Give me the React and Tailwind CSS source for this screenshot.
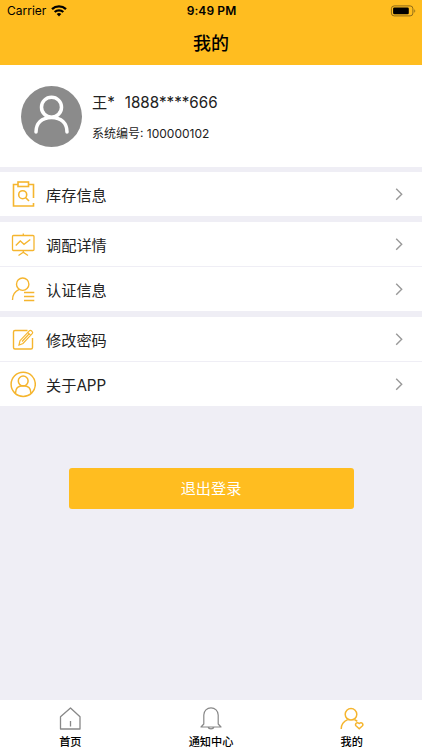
import React from "react";

const line = { fill: "none", stroke: "#f5b52e", strokeWidth: 1.4 };

const ClipboardIcon = () => (
  <svg width="26" height="28" viewBox="0 0 26 28" {...line} strokeWidth="1.6">
    <path d="M8 4.500H3.500V26H23.500V23M18.500 4.500H23.500V18" />
    <rect x="8" y="2" width="10.500" height="4.500" />
    <circle cx="12.700" cy="14.700" r="4" />
    <path d="M15.500 17.500l3.500 3.500" />
  </svg>
);

const BoardIcon = () => (
  <svg width="26" height="28" viewBox="0 0 26 28" {...line} strokeWidth="1.3">
    <rect x="2.500" y="5.500" width="21.500" height="15" rx="1" />
    <path d="M13.300 3.500v2M13.300 20.500v2M8.500 25.500l4.800-3.300 4.700 3.300M5.800 15.500l4.500-4.500 3.700 3.300 6.300-4.800" />
  </svg>
);

const UserListIcon = () => (
  <svg width="26" height="28" viewBox="0 0 26 28" {...line}>
    <circle cx="12.700" cy="9.200" r="6.200" />
    <path d="M2.500 25c0-5 2.500-8.700 6.700-10.600M14 17.500h10.300M14 21.500h10.300M14 25.500h10.300" />
  </svg>
);

const EditIcon = () => (
  <svg width="26" height="28" viewBox="0 0 26 28" {...line}>
    <path d="M17.500 5.500H5a1.500 1.500 0 0 0-1.500 1.500v15.500A1.500 1.500 0 0 0 5 24h16a1.500 1.500 0 0 0 1.500-1.500V13" />
    <path d="M9 20l1-4.300 9.300-9.900a1.500 1.500 0 0 1 2.100 0l.8.800a1.500 1.500 0 0 1 0 2.100L13 18.500zM17.800 7.500l2.900 2.900M19 9l-7 7.500" strokeWidth="1.200" />
  </svg>
);

const AboutIcon = () => (
  <svg width="26" height="28" viewBox="0 0 26 28" {...line} strokeWidth="1.500">
    <circle cx="13.200" cy="14.300" r="12.100" />
    <circle cx="13.200" cy="11" r="4.900" />
    <path d="M5.500 23c0-4.500 2.500-7.200 7.700-7.200s7.700 2.700 7.700 7.200" />
  </svg>
);

function Row({ icon, label }) {
  return (
    <div className="flex h-11 items-center bg-white pl-[10px] pr-[18px]">
      {icon}
      <span className="ml-[10px] flex-1 pt-[3px] text-[15.200px] leading-5 text-[#222]">{label}</span>
      <svg width="10" height="14" viewBox="0 0 10 14" fill="none" stroke="#999" strokeWidth="1.400">
        <path d="M2.200 1.700L7.700 7.200l-5.500 5.500" />
      </svg>
    </div>
  );
}

const HomeIcon = () => (
  <svg width="24" height="24" viewBox="0 0 24 24" fill="none" stroke="#888" strokeWidth="1.300" strokeLinejoin="round">
    <path d="M2.500 9.700L12.500 1l9.500 8.700v12.300h-19.500zM12.500 14v5.500" />
  </svg>
);

const BellIcon = () => (
  <svg width="24" height="24" viewBox="0 0 24 24" fill="none" stroke="#888" strokeWidth="1.200" strokeLinejoin="round">
    <path d="M4.800 17V8a7.200 7.200 0 0 1 14.400 0v9l2.800 3H2zM9 20c.8 2.400 5.200 2.400 6 0" />
  </svg>
);

const MineIcon = () => (
  <svg width="24" height="24" viewBox="0 0 24 24" {...line} strokeWidth="1.500">
    <circle cx="11" cy="7.300" r="5.800" />
    <path d="M1.200 22c0-4.700 2.600-7.800 6.500-9.400M14.500 12.800c1.300.5 2 .9 2.800 1.500" />
    <path d="M19.200 21.700l-3-2.700c-1.600-1.600.4-4.600 3-2.500 2.600-2.100 4.600.9 3 2.500z" />
  </svg>
);

function Tab({ icon, label }) {
  return (
    <div className="flex flex-1 flex-col items-center pt-[7px]">
      {icon}
      <span className="mt-[3px] text-[11.200px] font-medium leading-4 text-black">{label}</span>
    </div>
  );
}

export default function App() {
  return (
    <div className="flex h-[750px] w-[422px] flex-col overflow-hidden bg-[#efeef5] font-['Inter','Noto_Sans_CJK_SC',sans-serif]">
      <header className="h-[65px] shrink-0 bg-[#ffbd20] text-black">
        <div className="grid h-[22px] grid-cols-3 items-center pl-[7px] pr-[6px]">
          <div className="flex items-center gap-[5px]">
            <span className="text-[12px] leading-4">Carrier</span>
            <svg width="16" height="12" viewBox="0 0 16 12" fill="none" stroke="#000" strokeWidth="2.300">
              <path d="M1 4.200a10.300 10.300 0 0 1 14 0M3.700 7a6.300 6.300 0 0 1 8.600 0" />
              <path d="M8 11.500L5.700 9.100a3.400 3.400 0 0 1 4.600 0z" fill="#000" stroke="none" />
            </svg>
          </div>
          <span className="text-center text-[12px] font-semibold leading-4 tracking-[0.100px]">9:49 PM</span>
          <svg className="justify-self-end" width="26" height="12" viewBox="0 0 26 12">
            <rect x="1.400" y=".9" width="21.500" height="10" rx="2.800" fill="none" stroke="#8f6b18" />
            <rect x="3.100" y="2.500" width="15.700" height="6.800" rx="1.300" />
            <path d="M24.300 4.200c1.300.5 1.300 3 0 3.500z" fill="#8f6b18" />
          </svg>
        </div>
        <h1 className="mt-[8px] text-center text-[18px] font-medium leading-7">我的</h1>
      </header>

      <section className="flex h-[102px] shrink-0 items-center bg-white pl-[21px]">
        <svg width="61" height="61" viewBox="0 0 61 61" fill="none" stroke="#fff" strokeWidth="3.500" strokeLinecap="round">
          <circle cx="30.500" cy="30.500" r="30.500" fill="#8b8b8b" stroke="none" />
          <circle cx="30.500" cy="21.200" r="10" />
          <path d="M15 46c0-8.500 5.500-14.500 15.500-14.500S46 37.500 46 46" />
        </svg>
        <div className="ml-[10px] pt-[3px] text-[#222]">
          <div className="flex gap-[10px] text-[15.200px] leading-6"><span>王*</span><span>1888****666</span></div>
          <div className="mt-[9px] text-[12px] leading-5">系统编号: 100000102</div>
        </div>
      </section>

      <main className="flex flex-1 flex-col">
        <div className="mt-[5px]">
          <Row icon={<ClipboardIcon />} label="库存信息" />
        </div>
        <div className="mt-[6px] flex flex-col gap-px">
          <Row icon={<BoardIcon />} label="调配详情" />
          <Row icon={<UserListIcon />} label="认证信息" />
        </div>
        <div className="mt-[6px] flex flex-col gap-px">
          <Row icon={<EditIcon />} label="修改密码" />
          <Row icon={<AboutIcon />} label="关于APP" />
        </div>
        <button className="mx-auto mt-[62px] h-[41px] w-[285px] rounded-[3px] bg-[#ffbd20] text-[15.200px] leading-5 text-white">退出登录</button>
      </main>

      <nav className="flex h-[50px] shrink-0 bg-white">
        <Tab icon={<HomeIcon />} label="首页" />
        <Tab icon={<BellIcon />} label="通知中心" />
        <Tab icon={<MineIcon />} label="我的" />
      </nav>
    </div>
  );
}
